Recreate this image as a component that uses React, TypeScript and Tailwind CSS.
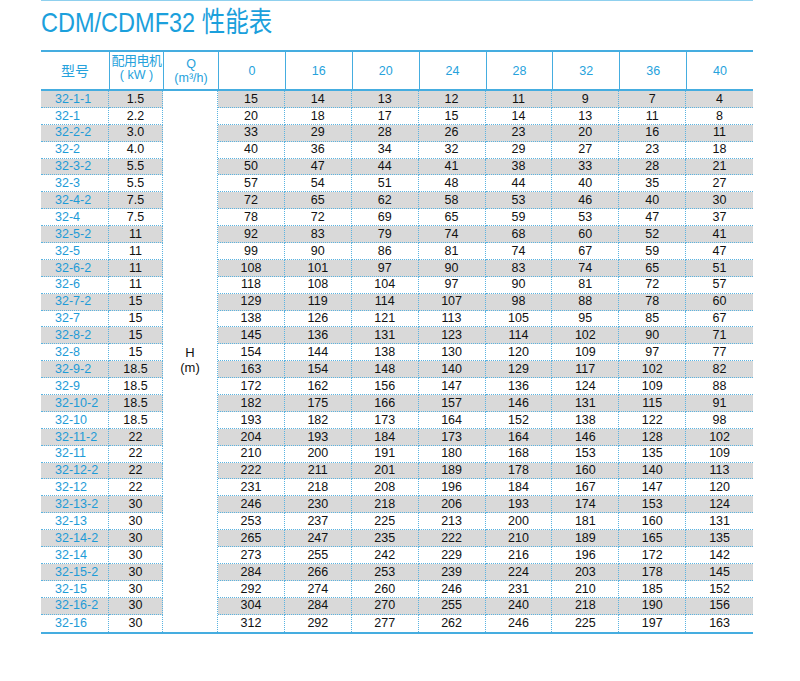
const flows = [0, 16, 20, 24, 28, 32, 36, 40]

const rows: [string, string, number[]][] = [
    ["32-1-1", "1.5", [15, 14, 13, 12, 11, 9, 7, 4]],
    ["32-1", "2.2", [20, 18, 17, 15, 14, 13, 11, 8]],
    ["32-2-2", "3.0", [33, 29, 28, 26, 23, 20, 16, 11]],
    ["32-2", "4.0", [40, 36, 34, 32, 29, 27, 23, 18]],
    ["32-3-2", "5.5", [50, 47, 44, 41, 38, 33, 28, 21]],
    ["32-3", "5.5", [57, 54, 51, 48, 44, 40, 35, 27]],
    ["32-4-2", "7.5", [72, 65, 62, 58, 53, 46, 40, 30]],
    ["32-4", "7.5", [78, 72, 69, 65, 59, 53, 47, 37]],
    ["32-5-2", "11", [92, 83, 79, 74, 68, 60, 52, 41]],
    ["32-5", "11", [99, 90, 86, 81, 74, 67, 59, 47]],
    ["32-6-2", "11", [108, 101, 97, 90, 83, 74, 65, 51]],
    ["32-6", "11", [118, 108, 104, 97, 90, 81, 72, 57]],
    ["32-7-2", "15", [129, 119, 114, 107, 98, 88, 78, 60]],
    ["32-7", "15", [138, 126, 121, 113, 105, 95, 85, 67]],
    ["32-8-2", "15", [145, 136, 131, 123, 114, 102, 90, 71]],
    ["32-8", "15", [154, 144, 138, 130, 120, 109, 97, 77]],
    ["32-9-2", "18.5", [163, 154, 148, 140, 129, 117, 102, 82]],
    ["32-9", "18.5", [172, 162, 156, 147, 136, 124, 109, 88]],
    ["32-10-2", "18.5", [182, 175, 166, 157, 146, 131, 115, 91]],
    ["32-10", "18.5", [193, 182, 173, 164, 152, 138, 122, 98]],
    ["32-11-2", "22", [204, 193, 184, 173, 164, 146, 128, 102]],
    ["32-11", "22", [210, 200, 191, 180, 168, 153, 135, 109]],
    ["32-12-2", "22", [222, 211, 201, 189, 178, 160, 140, 113]],
    ["32-12", "22", [231, 218, 208, 196, 184, 167, 147, 120]],
    ["32-13-2", "30", [246, 230, 218, 206, 193, 174, 153, 124]],
    ["32-13", "30", [253, 237, 225, 213, 200, 181, 160, 131]],
    ["32-14-2", "30", [265, 247, 235, 222, 210, 189, 165, 135]],
    ["32-14", "30", [273, 255, 242, 229, 216, 196, 172, 142]],
    ["32-15-2", "30", [284, 266, 253, 239, 224, 203, 178, 145]],
    ["32-15", "30", [292, 274, 260, 246, 231, 210, 185, 152]],
    ["32-16-2", "30", [304, 284, 270, 255, 240, 218, 190, 156]],
    ["32-16", "30", [312, 292, 277, 262, 246, 225, 197, 163]],
]

export default function App() {
    return (
        <div className="w-[800px] h-[681px] bg-white font-['Liberation_Sans','Noto_Sans_CJK_SC',sans-serif]">
            <div className="ml-[41px] w-[712px]">
                <div className="h-px bg-[#8fd0ee]" />

                {/* Title */}
                <h1 className="mt-[8px] h-[28px] text-[28px] leading-[28px] text-[#1ba0dc] whitespace-nowrap">
                    <span className="inline-block origin-left scale-x-[0.84]">CDM/CDMF32 性能表</span>
                </h1>

                {/* Header */}
                <div className="mt-[13px] grid grid-cols-[68px_54px_55px_repeat(8,1fr)] h-[41px] border-t-2 border-b-2 border-[#45ade0] text-[#26a2dc]">
                    <div className="flex items-center justify-center text-[14px] leading-none pt-[1px]">型号</div>
                    <div className="flex flex-col items-center pt-[1px] border-l border-[#45ade0]">
                        <span className="text-[13px] leading-[15px] tracking-[-0.5px] whitespace-nowrap">配用电机</span>
                        <span className="text-[12.5px] leading-[14px]">( kW )</span>
                    </div>
                    <div className="flex flex-col items-center justify-center border-l border-[#45ade0] pt-[1px]">
                        <span className="text-[12.5px] leading-[13px]">Q</span>
                        <span className="text-[12.5px] leading-[14px] whitespace-nowrap">(m³/h)</span>
                    </div>
                    {flows.map(f => (
                        <div key={f} className="flex items-center justify-center border-l border-[#45ade0] text-[12.5px] leading-none pt-[1px]">
                            {f}
                        </div>
                    ))}
                </div>

                {/* Body */}
                <div className="grid grid-cols-[68px_54px_55px_repeat(8,1fr)] auto-rows-[16.9px] border-b-2 border-[#45ade0] text-[12.5px] leading-none">
                    <div className="col-start-3 row-[1/span_32] flex flex-col items-center justify-center border-r border-dotted border-[#5ab3e0] text-[#111] text-[13px] leading-[15px] pb-[2px]">
                        <span>H</span>
                        <span>(m)</span>
                    </div>
                    {rows.map(([model, kw, vals], i) => {
                        const shade = i % 2 === 0 ? "bg-[#d9d9d9]" : "bg-white"
                        const bottom = i < rows.length - 1 ? "border-b border-dotted border-[#5ab3e0]" : ""
                        return [
                            <div key={`m${i}`} className={`flex items-center pl-[14px] text-[#1e9bd7] border-r border-dotted border-[#5ab3e0] ${shade} ${bottom}`}>
                                {model}
                            </div>,
                            <div key={`k${i}`} className={`flex items-center justify-center text-[#111] border-r border-dotted border-[#5ab3e0] ${shade} ${bottom}`}>
                                {kw}
                            </div>,
                            ...vals.map((v, j) => (
                                <div
                                    key={`v${i}-${j}`}
                                    className={`flex items-center justify-center text-[#111] ${j < 7 ? "border-r border-dotted border-[#5ab3e0]" : ""} ${shade} ${bottom}`}
                                >
                                    {v}
                                </div>
                            )),
                        ]
                    })}
                </div>
            </div>
        </div>
    )
}
